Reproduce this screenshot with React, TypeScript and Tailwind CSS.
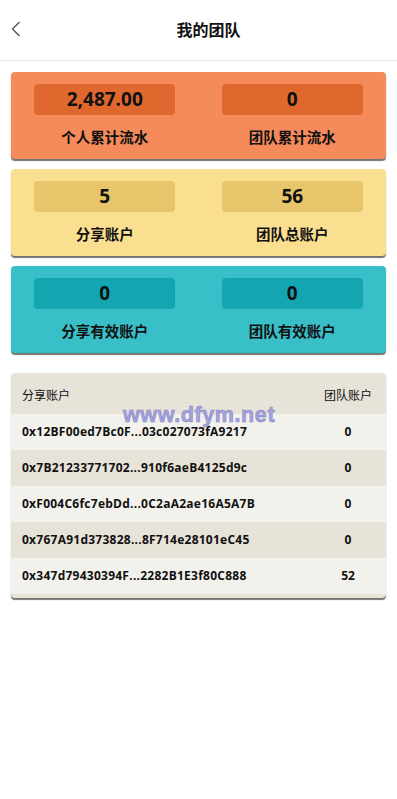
import React from "react";

interface StatItem {
    value: string;
    label: string;
}

interface StatCardProps {
    items: StatItem[];
    bg: string;
    inner: string;
}

const font = { fontFamily: '"Open Sans", "Noto Sans CJK SC", sans-serif' };

const cards: StatCardProps[] = [
    {
        items: [
            { value: "2,487.00", label: "个人累计流水" },
            { value: "0", label: "团队累计流水" },
        ],
        bg: "bg-[#f58a5b]",
        inner: "bg-[#e0682f]",
    },
    {
        items: [
            { value: "5", label: "分享账户" },
            { value: "56", label: "团队总账户" },
        ],
        bg: "bg-[#fbdf90]",
        inner: "bg-[#e6c56b]",
    },
    {
        items: [
            { value: "0", label: "分享有效账户" },
            { value: "0", label: "团队有效账户" },
        ],
        bg: "bg-[#38bfc8]",
        inner: "bg-[#13a6b1]",
    },
];

const rows = [
    { address: "0x12BF00ed7Bc0F...03c027073fA9217", count: "0" },
    { address: "0x7B21233771702...910f6aeB4125d9c", count: "0" },
    { address: "0xF004C6fc7ebDd...0C2aA2ae16A5A7B", count: "0" },
    { address: "0x767A91d373828...8F714e28101eC45", count: "0" },
    { address: "0x347d79430394F...2282B1E3f80C888", count: "52" },
];

function StatCard({ items, bg, inner }: StatCardProps) {
    return (
        <div className={`${bg} rounded-[4px] shadow-[0_2px_1px_rgba(0,0,0,0.55)] grid grid-cols-2 pt-3 pb-[13px]`}>
            {items.map((item, i) => (
                <div key={i} className="flex flex-col items-center">
                    <div
                        className={`${inner} w-[141px] h-[31px] rounded-[4px] flex items-center justify-center text-[19px] font-bold text-[#111]`}
                    >
                        {item.value}
                    </div>
                    <div className="mt-[15px] text-[14.5px] font-semibold leading-[16px] text-[#111]">{item.label}</div>
                </div>
            ))}
        </div>
    );
}

export default function App() {
    return (
        <div className="min-h-[799px] bg-white" style={font}>
            {/* 顶部导航 */}
            <div className="relative h-[61px] border-b border-[#e8e8e8] flex items-center justify-center">
                <button className="absolute left-[8px] top-[20px] w-[16px] h-[18px] flex items-center justify-center">
                    <svg width="10" height="16" viewBox="0 0 10 16" fill="none">
                        <path d="M8.5 1 L1.5 8 L8.5 15" stroke="#555" strokeWidth="1.4" />
                    </svg>
                </button>
                <h1 className="ml-[20px] text-[16px] font-bold text-[#111] -mt-[1px]">我的团队</h1>
            </div>

            <div className="px-[11px] pt-[11px] flex flex-col gap-[10px]">
                {cards.map((c, i) => (
                    <StatCard key={i} {...c} />
                ))}
            </div>

            {/* 团队列表 */}
            <div className="relative mx-[11px] mt-[20px] bg-[#e8e3d8] rounded-[4px] pb-[4px] shadow-[0_2px_1px_rgba(0,0,0,0.55)] text-[12px] text-[#111]">
                <div className="h-[41px] flex items-center pl-[11px] pr-[12px] pt-[5px]">
                    <span className="flex-1">分享账户</span>
                    <span className="w-[52px] text-center">团队账户</span>
                </div>
                {rows.map((r, i) => (
                    <div
                        key={i}
                        className={`h-[36px] flex items-center pl-[11px] pr-[12px] font-bold ${i % 2 === 0 ? "bg-[#f3f1ec]" : "bg-[#e8e3d8]"}`}
                    >
                        <span className="flex-1 tracking-[0.25px]">{r.address}</span>
                        <span className="w-[52px] text-center">{r.count}</span>
                    </div>
                ))}
                <div
                    className="absolute left-[112px] top-[26px] text-[21.5px] font-bold text-[#a3a2dc] tracking-[0.6px] pointer-events-none"
                    style={{ fontFamily: '"Liberation Sans", Arial, sans-serif', WebkitTextStroke: "0.6px #8a89c8" }}
                >
                    www.dfym.net
                </div>
            </div>
        </div>
    );
}
